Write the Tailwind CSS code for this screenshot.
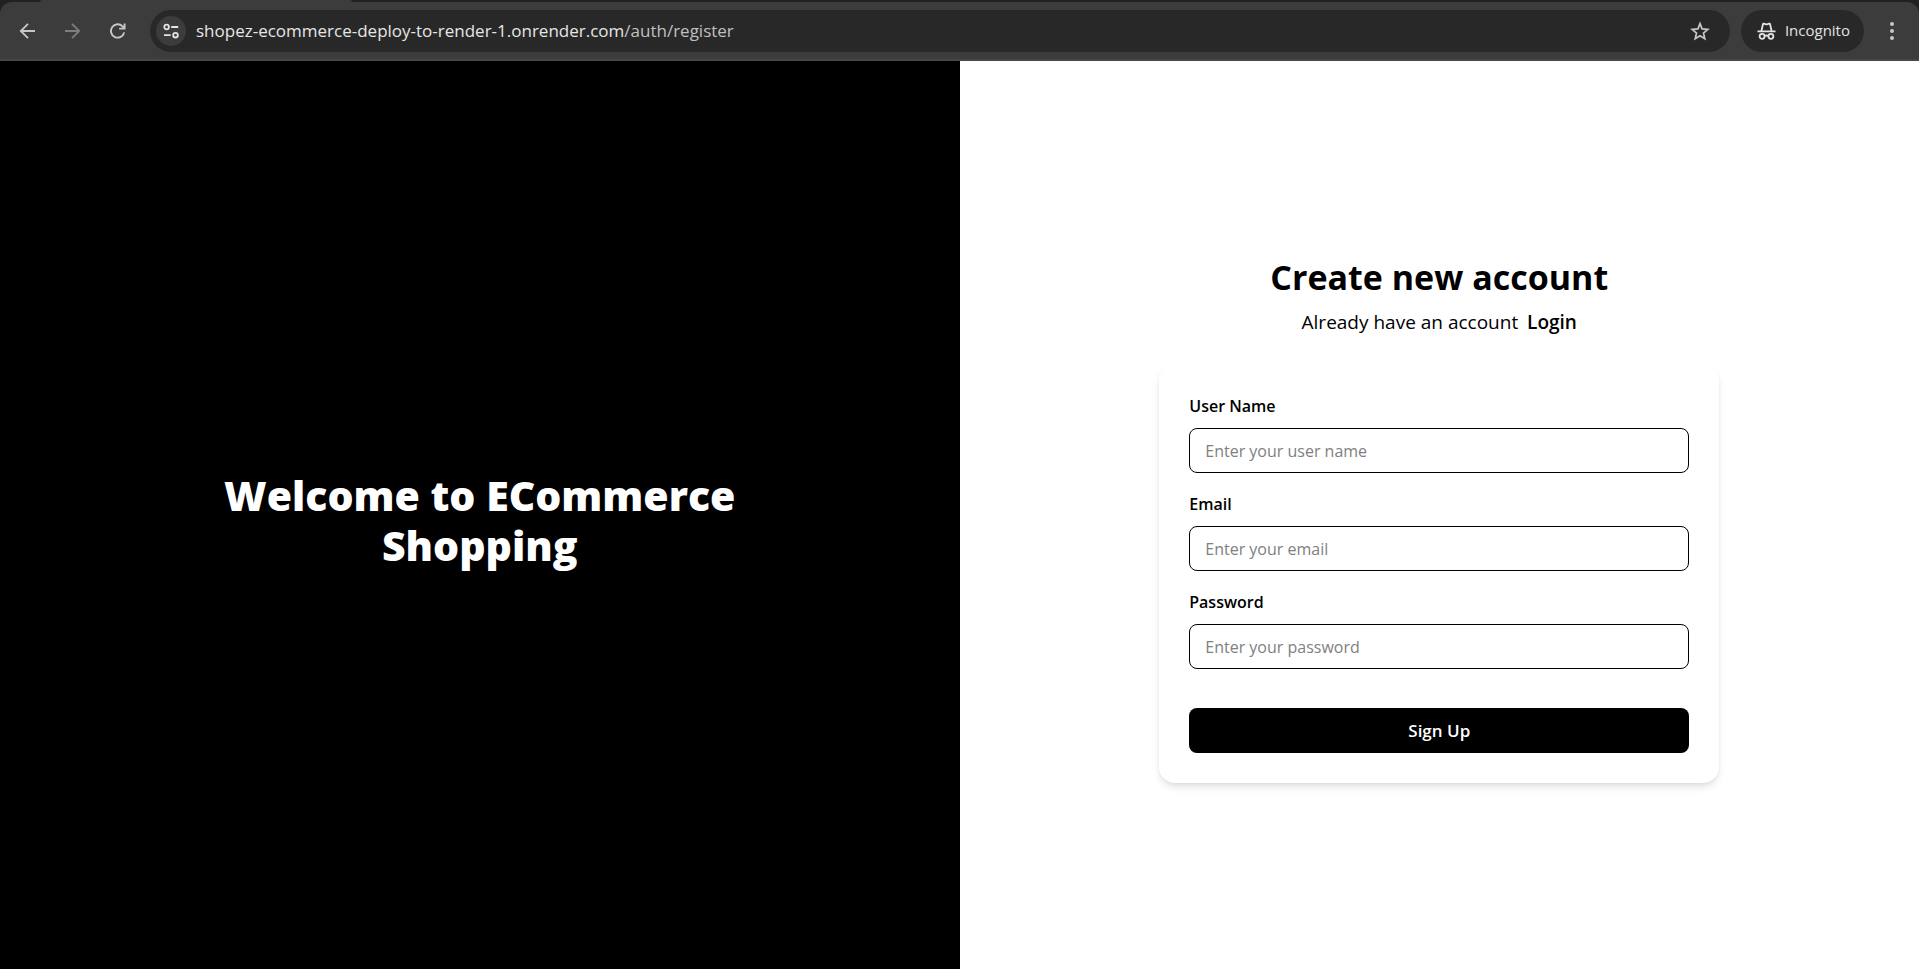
<!DOCTYPE html>
<html lang="en">
<head>
<meta charset="utf-8">
<title>Create new account</title>
<script src="https://cdn.jsdelivr.net/npm/@tailwindcss/browser@4"></script>
</head>
<body class="flex min-h-screen flex-col bg-white font-['Segoe_UI','Open_Sans',sans-serif] text-black">
  <header class="bg-[#202121]">
    <div class="flex h-[2px] pr-4 pl-10"><div class="w-[312px] rounded-t-sm bg-[#3c3c3c]"></div></div>
    <div class="flex h-[59px] items-center rounded-t-xl border-b-2 border-[#474747] bg-[#3c3c3c] pr-[15px] pl-4">
      <nav class="flex items-center gap-[21px]" aria-label="Browser">
        <button type="button" aria-label="Back" class="flex size-6 items-center justify-center text-[#c7c7c7]">
          <svg class="size-6" viewBox="0 0 24 24" fill="none" stroke="currentColor" stroke-width="1.8"><path d="M19 12H5M12 4.800 4.800 12l7.200 7.200"/></svg>
        </button>
        <button type="button" aria-label="Forward" class="flex size-6 items-center justify-center text-[#7d7d7d]">
          <svg class="size-6" viewBox="0 0 24 24" fill="none" stroke="currentColor" stroke-width="1.8"><path d="M4 12h14M11 4.800l7.200 7.200-7.200 7.200"/></svg>
        </button>
        <button type="button" aria-label="Reload" class="flex size-6 items-center justify-center text-[#c7c7c7]">
          <svg class="size-6" viewBox="0 0 24 24" fill="none" stroke="currentColor" stroke-width="1.9"><path d="M18.200 13.400A6.700 6.700 0 1 1 16.600 7.400l1.600 1.800M18.600 4.600v5h-5.400"/></svg>
        </button>
      </nav>
      <div class="ml-5 flex h-[42px] flex-1 items-center rounded-full bg-[#282828] pr-[18px] pl-[6px]">
        <button type="button" aria-label="View site information" class="flex size-[30px] items-center justify-center rounded-full bg-[#3c3c3c] text-[#e3e3e3]">
          <svg class="size-[18px]" viewBox="0 0 18 18" fill="none" stroke="currentColor" stroke-width="1.8"><circle cx="4.6" cy="5" r="2.3"/><path d="M9.2 5h7M2 13.2h6.6"/><circle cx="13.5" cy="13.2" r="2.3"/></svg>
        </button>
        <p class="ml-[10px] flex-1 pt-px text-[17px] leading-[22px] text-[#e6e6e6]">shopez-ecommerce-deploy-to-render-1.onrender.com<span class="text-[#c0c0c0]">/auth/register</span></p>
        <button type="button" aria-label="Bookmark this tab" class="flex size-6 items-center justify-center text-[#c7c7c7]">
          <svg class="size-6" viewBox="0 0 24 24" fill="none" stroke="currentColor" stroke-width="1.7"><path d="m12 4.600 2.100 5.300 5.700.5-4.300 3.700 1.300 5.600-4.800-3-4.800 3 1.300-5.600-4.300-3.700 5.700-.5Z"/></svg>
        </button>
      </div>
      <button type="button" class="ml-[11px] flex h-[42px] items-center gap-[9px] rounded-full bg-[#282828] pr-[14px] pl-[16px] text-[15px] text-[#e3e3e3]">
        <svg class="h-[18px] w-[19px]" viewBox="0 0 19 18" fill="none" stroke="currentColor" stroke-width="1.8"><path d="M.5 9.300h18M4.400 9 6 2.100q.2-.7.900-.500l1.600.6q1 .3 2 0l1.600-.6q.7-.2.9.5L14.600 9"/><circle cx="5.100" cy="14.300" r="2.500"/><circle cx="13.900" cy="14.300" r="2.500"/><path d="M7.600 14q1.900-1 3.800 0"/></svg>
        Incognito
      </button>
      <button type="button" aria-label="Browser menu" class="ml-4 flex size-6 items-center justify-center text-[#c7c7c7]">
        <svg class="size-6" viewBox="0 0 24 24" fill="currentColor"><circle cx="12" cy="5" r="2"/><circle cx="12" cy="12" r="2"/><circle cx="12" cy="19" r="2"/></svg>
      </button>
    </div>
  </header>

  <div class="flex flex-1">
    <section class="flex w-1/2 items-center justify-center bg-black px-[60px]">
      <h1 class="max-w-[520px] pt-[10px] text-center text-[41px] leading-[50px] font-extrabold text-white">Welcome to ECommerce Shopping</h1>
    </section>
    <main class="flex flex-1 flex-col items-center justify-center px-5">
      <div class="w-full max-w-[560px]">
        <div class="text-center">
          <h2 class="pt-2 text-[34px] leading-[44px] font-bold">Create new account</h2>
          <p class="mt-2 text-[19px] leading-[30px]">Already have an account <a href="#login" class="ml-1 font-semibold">Login</a></p>
        </div>
        <form class="mt-7 rounded-2xl p-[30px] shadow-[0_5px_8px_-1px_rgba(0,0,0,0.1),0_2px_5px_-2px_rgba(0,0,0,0.1)]">
          <div class="flex flex-col gap-5">
            <div class="flex flex-col gap-[11px]">
              <label for="userName" class="text-[16px] leading-[22px] font-semibold">User Name</label>
              <input id="userName" type="text" placeholder="Enter your user name" class="h-[45px] w-full rounded-lg border border-black px-[15px] text-[16px] placeholder:text-[#808080]">
            </div>
            <div class="flex flex-col gap-[11px]">
              <label for="email" class="text-[16px] leading-[22px] font-semibold">Email</label>
              <input id="email" type="email" placeholder="Enter your email" class="h-[45px] w-full rounded-lg border border-black px-[15px] text-[16px] placeholder:text-[#808080]">
            </div>
            <div class="flex flex-col gap-[11px]">
              <label for="password" class="text-[16px] leading-[22px] font-semibold">Password</label>
              <input id="password" type="password" placeholder="Enter your password" class="h-[45px] w-full rounded-lg border border-black px-[15px] text-[16px] placeholder:text-[#808080]">
            </div>
          </div>
          <button type="submit" class="mt-[39px] h-[45px] w-full rounded-lg bg-black text-[17px] font-semibold text-white">Sign Up</button>
        </form>
      </div>
    </main>
  </div>
</body>
</html>
